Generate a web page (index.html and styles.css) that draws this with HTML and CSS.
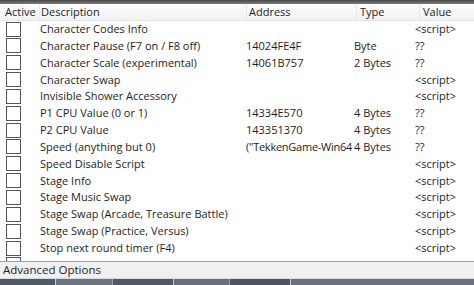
FILE: index.html
```html
<!DOCTYPE html>
<html><head>
<title>Cheat Table</title>
<link rel="stylesheet" href="styles.css"></head><body>
<div class="topstrip"></div>
<div class="table">
  <div class="row head">
    <div class="c act">Active</div>
    <div class="c desc">Description</div>
    <div class="c addr">Address</div>
    <div class="c type">Type</div>
    <div class="c val">Value</div>
  </div>
  <div class="rows">
    <div class="row"><div class="c act"><span class="box"></span></div><div class="c desc">Character Codes Info</div><div class="c addr"></div><div class="c type"></div><div class="c val">&lt;script&gt;</div></div>
    <div class="row"><div class="c act"><span class="box"></span></div><div class="c desc">Character Pause (F7 on / F8 off)</div><div class="c addr">14024FE4F</div><div class="c type">Byte</div><div class="c val">??</div></div>
    <div class="row"><div class="c act"><span class="box"></span></div><div class="c desc">Character Scale (experimental)</div><div class="c addr">14061B757</div><div class="c type">2 Bytes</div><div class="c val">??</div></div>
    <div class="row"><div class="c act"><span class="box"></span></div><div class="c desc">Character Swap</div><div class="c addr"></div><div class="c type"></div><div class="c val">&lt;script&gt;</div></div>
    <div class="row"><div class="c act"><span class="box"></span></div><div class="c desc">Invisible Shower Accessory</div><div class="c addr"></div><div class="c type"></div><div class="c val">&lt;script&gt;</div></div>
    <div class="row"><div class="c act"><span class="box"></span></div><div class="c desc">P1 CPU Value (0 or 1)</div><div class="c addr">14334E570</div><div class="c type">4 Bytes</div><div class="c val">??</div></div>
    <div class="row"><div class="c act"><span class="box"></span></div><div class="c desc">P2 CPU Value</div><div class="c addr">143351370</div><div class="c type">4 Bytes</div><div class="c val">??</div></div>
    <div class="row"><div class="c act"><span class="box"></span></div><div class="c desc">Speed (anything but 0)</div><div class="c addr tight">("TekkenGame-Win64</div><div class="c type">4 Bytes</div><div class="c val">??</div></div>
    <div class="row"><div class="c act"><span class="box"></span></div><div class="c desc">Speed Disable Script</div><div class="c addr"></div><div class="c type"></div><div class="c val">&lt;script&gt;</div></div>
    <div class="row"><div class="c act"><span class="box"></span></div><div class="c desc">Stage Info</div><div class="c addr"></div><div class="c type"></div><div class="c val">&lt;script&gt;</div></div>
    <div class="row"><div class="c act"><span class="box"></span></div><div class="c desc">Stage Music Swap</div><div class="c addr"></div><div class="c type"></div><div class="c val">&lt;script&gt;</div></div>
    <div class="row"><div class="c act"><span class="box"></span></div><div class="c desc">Stage Swap (Arcade, Treasure Battle)</div><div class="c addr"></div><div class="c type"></div><div class="c val">&lt;script&gt;</div></div>
    <div class="row"><div class="c act"><span class="box"></span></div><div class="c desc">Stage Swap (Practice, Versus)</div><div class="c addr"></div><div class="c type"></div><div class="c val">&lt;script&gt;</div></div>
    <div class="row"><div class="c act"><span class="box"></span></div><div class="c desc">Stop next round timer (F4)</div><div class="c addr"></div><div class="c type"></div><div class="c val">&lt;script&gt;</div></div>
    <div class="row"><div class="c act"><span class="box"></span></div><div class="c desc">Treasure Battle Mode (Cheat Quality ?</div><div class="c addr"></div><div class="c type"></div><div class="c val">&lt;script&gt;</div></div>
  </div>
</div>
<div class="adv">Advanced Options</div>
<div class="taskbar">
  <span class="tb t1"></span><span class="tb t2"></span><span class="tb t3"></span><span class="tb t4"></span><span class="tb t5"></span><span class="tb t6"></span>
</div>
</body></html>
```

FILE: styles.css
```css
body{margin:0;padding:0;width:474px;height:285px;overflow:hidden;background:#fff;
font-family:"Open Sans","Noto Sans",sans-serif;font-size:11px;color:#1e1e1e;}
.topstrip{height:4px;background:linear-gradient(#4a4a4a,#7a7a7a);}
.table{height:257px;overflow:hidden;background:#fff;}
.row{display:flex;height:16.85px;line-height:16.85px;white-space:nowrap;}
.head{height:16px;line-height:16px;background:linear-gradient(#fdfdfd,#f1f2f4);border-bottom:1px solid #e3e5e8;}
.head .c{border-right:1px solid #e6e8eb;}
.c{overflow:hidden;}
.act{width:34px;padding-left:5px;}
.desc{width:205px;padding-left:1px;}
.addr{width:107px;padding-left:1px;}
.tight{letter-spacing:-0.25px;}
.type{width:59px;padding-left:1px;}
.val{flex:1;padding-left:2px;}
.head .act{width:34px;}
.head .addr{padding-left:2px;}
.head .type{padding-left:3px;}
.head .val{padding-left:3px;border-right:none;}
.box{display:inline-block;width:13px;height:13px;border:1px solid #555;background:#fff;vertical-align:middle;margin-top:-2px;margin-left:1px;}
.adv{height:16px;line-height:16px;padding-left:3px;background:#f0f0f0;border-top:1px solid #a0a0a0;border-bottom:1px solid #d8d8d8;font-size:11.5px;}
.taskbar{display:flex;height:6px;background:#5c6470;}
.tb{display:block;height:6px;}
.t1{width:55px;background:#4f5966;}
.t2{width:56px;background:#6d7480;border-left:1px solid #c8ccd2;}
.t3{width:60px;background:#505966;border-left:1px solid #9aa0a8;}
.t4{width:55px;background:#6a707b;border-left:1px solid #c8ccd2;}
.t5{width:60px;background:#4c5562;border-left:1px solid #9aa0a8;}
.t6{flex:1;background:#6b727d;border-left:1px solid #c8ccd2;}
```
